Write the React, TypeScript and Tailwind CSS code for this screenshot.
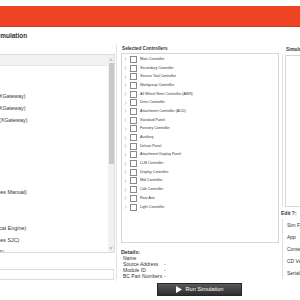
const AVAILABLE: { tail: string; shift: number }[] = [
  { tail: "", shift: 0 },
  { tail: "", shift: 0 },
  { tail: "(XGateway)", shift: -2 },
  { tail: "(XGateway)", shift: -2 },
  { tail: "(XGateway)", shift: 0 },
  { tail: "", shift: 0 },
  { tail: "", shift: 0 },
  { tail: "", shift: 0 },
  { tail: "", shift: 0 },
  { tail: "", shift: 0 },
  { tail: "ies Manual)", shift: 0 },
  { tail: "", shift: 0 },
  { tail: "", shift: 0 },
  { tail: "cat Engine)", shift: 0 },
  { tail: "ies SJC)", shift: 0 },
  { tail: "A)", shift: 0 },
];

const CONTROLLERS = [
  "Main Controller",
  "Secondary Controller",
  "Service Tool Controller",
  "Workgroup Controller",
  "All Wheel Steer Controller (AWS)",
  "Drive Controller",
  "Attachment Controller (ACD)",
  "Standard Panel",
  "Forestry Controller",
  "Auxiliary",
  "Deluxe Panel",
  "Attachment Display Panel",
  "LLM Controller",
  "Display Controller",
  "Mid Controller",
  "Cab Controller",
  "Rear Axe",
  "Light Controller",
];

const DETAILS = [
  { label: "Name", value: "" },
  { label: "Source Address", value: "-" },
  { label: "Module ID", value: "-" },
  { label: "BC Part Numbers", value: "-" },
];

const EDIT_ROWS = ["Sim File", "App", "Context", "CD Version", "Serial No."];

export default function App() {
  return (
    <div className="w-[300px] h-[300px] overflow-hidden bg-white text-[#333] font-['Liberation_Sans',Arial,sans-serif]">
      {/* TOP BAR */}
      <div className="h-[6px]" />
      <div className="h-[21px] bg-[#ef4424] border-b border-[#cf3a1f]" />

      {/* TITLE */}
      <div className="h-[17px] pt-[5px]">
        <h1 className="ml-[-6px] text-[6.5px] leading-[8px] font-bold whitespace-nowrap">Simulation</h1>
      </div>

      <div className="flex items-start">
        {/* AVAILABLE CONTROLLERS (scrolled off left) */}
        <div className="w-[117px] h-[237px] shrink-0 border-r border-[#e3e3e3]">
          <div className="h-[10px]" />
          <div className="ml-[-2px] w-[117px] h-[199px] border border-[#dcdcdc] flex overflow-hidden">
            <div className="flex-1 overflow-hidden">
              <div className="h-[11px] bg-[#f2f2f2] border-b border-[#e8e8e8]" />
              {AVAILABLE.map((row, i) => (
                <div key={i} className="h-[12px] text-[5.4px] leading-[12px] whitespace-nowrap overflow-hidden">
                  <span className="block" style={{ marginLeft: row.shift }}>
                    {row.tail}
                  </span>
                </div>
              ))}
            </div>
            <div className="w-[6px] shrink-0 bg-[#f1f1f1] flex flex-col items-center">
              <div className="h-[8px] flex items-center justify-center">
                <svg width="4" height="3" viewBox="0 0 4 3">
                  <path d="M0 3 L2 0 L4 3 Z" fill="#c4c4c4" />
                </svg>
              </div>
              <div className="w-[5px] h-[101px] bg-[#c9c9c9]" />
              <div className="flex-1" />
              <div className="h-[8px] flex items-center justify-center">
                <svg width="4" height="3" viewBox="0 0 4 3">
                  <path d="M0 0 L4 0 L2 3 Z" fill="#c4c4c4" />
                </svg>
              </div>
            </div>
          </div>
          <div className="mt-[16px] ml-[-2px] w-[116px] h-[11px] border border-[#dcdcdc]" />
        </div>

        {/* SELECTED CONTROLLERS */}
        <div className="ml-[3px] w-[161px] shrink-0">
          <div className="h-[9px] pl-[2px] text-[4.7px] leading-[9px] font-bold whitespace-nowrap">
            Selected Controllers
          </div>
          <div className="ml-[1px] w-[158px] h-[190px] border border-[#d6d6d6] pt-[1px] overflow-hidden">
            {CONTROLLERS.map((name) => (
              <div key={name} className="h-[8.7px] flex items-center pl-[2px]">
                <svg width="3" height="4" viewBox="0 0 3 4" className="shrink-0">
                  <path d="M0.5 0.5 L2.5 2 L0.5 3.5" fill="none" stroke="#c8c8c8" strokeWidth="0.8" />
                </svg>
                <div className="ml-[3px] w-[7px] h-[7px] shrink-0 border border-[#8a8a8a] bg-white" />
                <span className="ml-[3px] text-[3.6px] leading-[5px] whitespace-nowrap">{name}</span>
              </div>
            ))}
          </div>

          {/* DETAILS */}
          <div className="mt-[6px] pl-[1px] h-[6px] text-[5.3px] leading-[6px] font-bold">Details:</div>
          <div className="pl-[3px] grid grid-cols-[41px_auto] text-[5px] leading-[6px]">
            {DETAILS.map((d) => (
              <div key={d.label} className="contents">
                <span className="h-[6px] whitespace-nowrap">{d.label}</span>
                <span className="h-[6px]">{d.value}</span>
              </div>
            ))}
          </div>

          <button className="mt-[4px] ml-[37px] w-[85px] h-[13px] flex items-center justify-center gap-[4px] bg-gradient-to-b from-[#585858] to-[#2e2e2e] border border-[#262626] text-white">
            <svg width="6" height="7" viewBox="0 0 6 7">
              <path d="M0 0 L6 3.5 L0 7 Z" fill="#ffffff" />
            </svg>
            <span className="text-[5.6px] leading-[7px] whitespace-nowrap">Run Simulation</span>
          </button>
        </div>

        {/* SIMULATION PANEL (cut off right) */}
        <div className="w-[40px] shrink-0">
          <div className="h-[11px] pl-[5px] pt-[1px] text-[4.7px] leading-[9px] font-bold whitespace-nowrap">
            Simulation Details
          </div>
          <div className="ml-[1px] h-[152px] border-l border-[#e0e0e0] pl-[2px]">
            <div className="h-full border border-[#d6d6d6]" />
          </div>
          <div className="mt-[3px] h-[6px] text-[5px] leading-[6px] font-bold whitespace-nowrap">Edit ?:</div>
          <div className="mt-[3px] ml-[1px] border-l border-[#e0e0e0] pl-[4px]">
            {EDIT_ROWS.map((r) => (
              <div key={r} className="h-[12px] text-[5px] leading-[12px] whitespace-nowrap">
                {r}
              </div>
            ))}
          </div>
        </div>
      </div>
    </div>
  );
}
